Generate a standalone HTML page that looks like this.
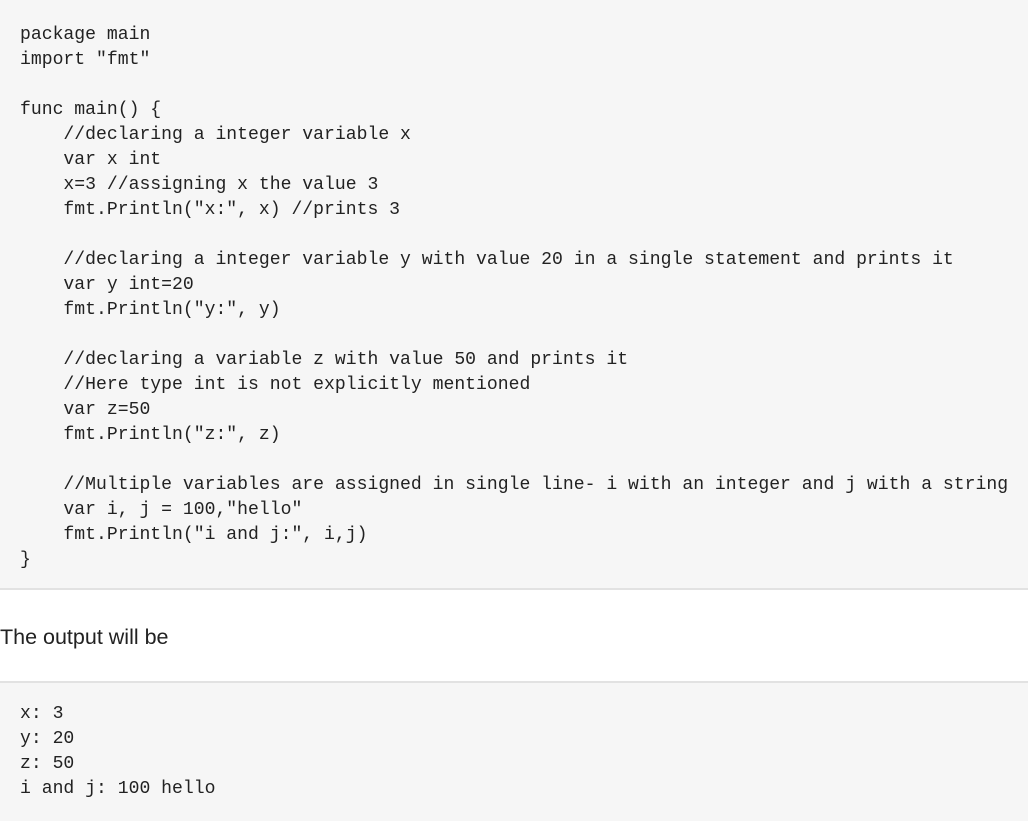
<!DOCTYPE html>
<html><head><meta charset="utf-8"><style>
html,body{margin:0;padding:0;background:#fff;width:1028px;height:807px;overflow:hidden}
pre{margin:0;font-family:"Liberation Mono",monospace;font-size:18.1px;line-height:25px;color:#222;background:#f6f6f6;padding:0 0 0 20px;white-space:pre}
#a{position:absolute;left:0;top:0;width:1028px;height:590px;padding-top:23px;border-bottom:2px solid #e2e2e2;box-sizing:border-box}
#b{position:absolute;left:0;top:681px;width:1028px;height:140px;padding-top:19px;border-top:2px solid #e2e2e2;box-sizing:border-box}
p{position:absolute;left:0;top:625px;margin:0;font-family:"Liberation Sans",sans-serif;font-size:21.5px;color:#222}
</style></head><body>
<pre id="a">package main
import "fmt"

func main() {
    //declaring a integer variable x
    var x int
    x=3 //assigning x the value 3
    fmt.Println("x:", x) //prints 3

    //declaring a integer variable y with value 20 in a single statement and prints it
    var y int=20
    fmt.Println("y:", y)

    //declaring a variable z with value 50 and prints it
    //Here type int is not explicitly mentioned
    var z=50
    fmt.Println("z:", z)

    //Multiple variables are assigned in single line- i with an integer and j with a string
    var i, j = 100,"hello"
    fmt.Println("i and j:", i,j)
}</pre>
<p>The output will be</p>
<pre id="b">x: 3
y: 20
z: 50
i and j: 100 hello</pre>
</body></html>
